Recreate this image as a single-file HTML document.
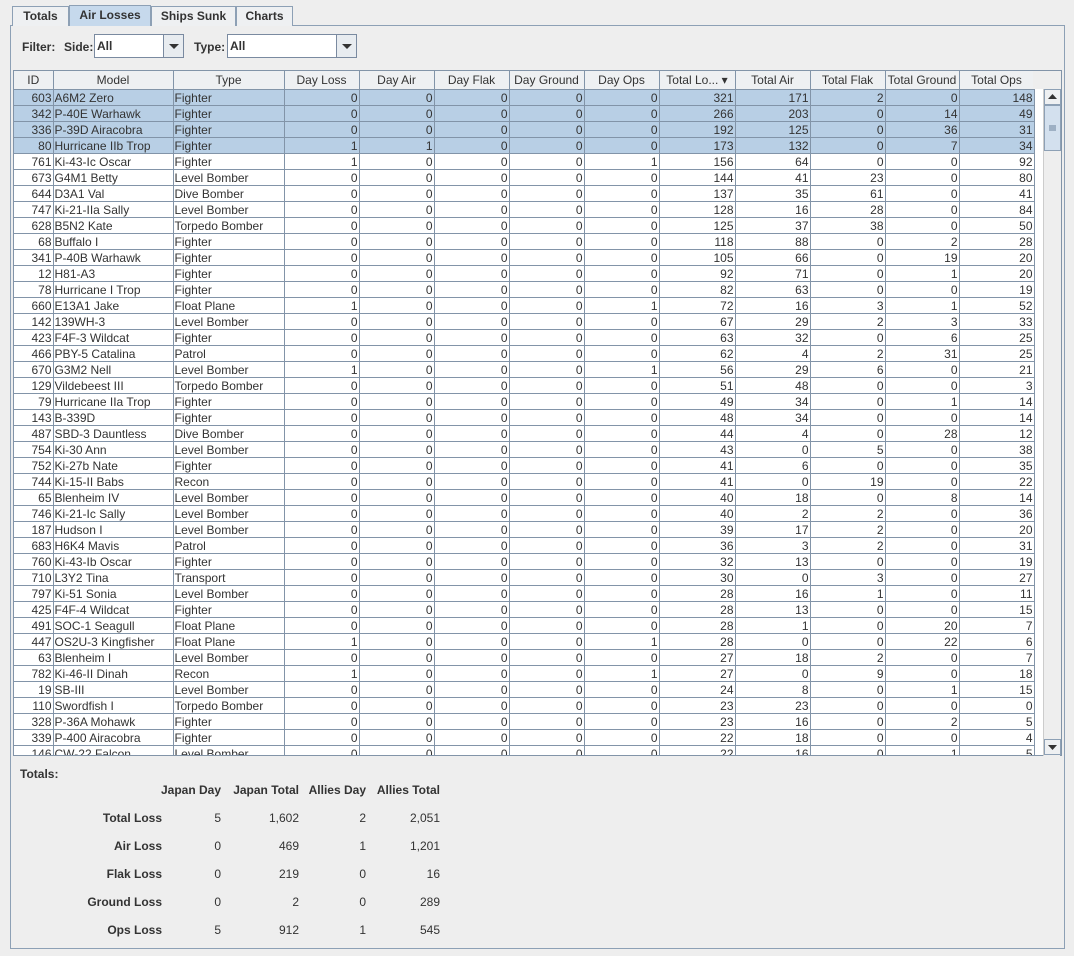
<!DOCTYPE html>
<html><head><meta charset="utf-8"><style>
*{box-sizing:border-box;margin:0;padding:0}
body{width:1074px;height:956px;background:#eeeeee;font-family:"Liberation Sans",sans-serif;font-size:12px;color:#333;position:relative;overflow:hidden}
.tab{position:absolute;top:6px;height:20px;border:1px solid #8da0b5;border-bottom:none;background:#eef0f2;font-weight:bold;font-size:12px;line-height:18px;text-align:center;color:#333}
.panel{position:absolute;left:10px;top:25px;width:1055px;height:924px;border:1px solid #8da0b5;background:#eeeeee}
.lbl{position:absolute;font-weight:bold;font-size:12px}
.combo{position:absolute;height:24px;border:1px solid #7a8aa0;background:#fff;font-weight:bold;line-height:22px;padding-left:2px}
.combo .btn{position:absolute;right:0;top:0;width:20px;height:22px;border-left:1px solid #7a8aa0;background:#e8ecf0}
.combo .btn:after{content:"";position:absolute;left:5px;top:9px;border-left:5px solid transparent;border-right:5px solid transparent;border-top:5px solid #333}
.tw{position:absolute;left:13px;top:70px;width:1030px;height:686px;overflow:hidden;background:#fff;border-left:1px solid #8294a8}
table{border-collapse:collapse;table-layout:fixed;width:1020px}
th{height:19px;font-weight:normal;background:#eef0f2;border-right:1px solid #8294a8;border-bottom:1px solid #8294a8;text-align:center;white-space:nowrap;overflow:hidden;padding:1px 0 0}
td{height:16px;line-height:14px;border-right:1px solid #8294a8;border-bottom:1px solid #8294a8;text-align:right;padding:1px 1px 0;white-space:nowrap;overflow:hidden}
td:nth-child(2),td:nth-child(3){text-align:left}
tr.s td{background:#b8cfe5}
.sb{position:absolute;left:1043px;top:89px;width:17px;height:667px;background:#eeeeee;border-left:1px solid #ccc}
.ar{position:absolute;left:0;width:17px;height:16px;border:1px solid #8da0b5;background:#eef0f2}
.thumb{position:absolute;left:0;top:16px;width:17px;height:46px;border:1px solid #8da0b5;background:#d3e0ee}
.tt{position:absolute;font-size:12px}
.b{font-weight:bold}
.r{text-align:right}
</style></head><body>
<div class="panel"></div>
<div class="tab" style="left:12px;width:57px">Totals</div>
<div class="tab" style="left:69px;width:82px;top:5px;height:21px;background:#c6d9ec">Air Losses</div>
<div class="tab" style="left:151px;width:85px">Ships Sunk</div>
<div class="tab" style="left:236px;width:57px">Charts</div>
<div class="lbl" style="left:22px;top:40px">Filter:</div>
<div class="lbl" style="left:64px;top:40px">Side:</div>
<div class="combo" style="left:94px;top:34px;width:90px">All<div class="btn"></div></div>
<div class="lbl" style="left:194px;top:40px">Type:</div>
<div class="combo" style="left:227px;top:34px;width:130px">All<div class="btn"></div></div>
<div class="tw"><table>
<colgroup><col style="width:39px"><col style="width:120px"><col style="width:111px"><col style="width:75px"><col style="width:75px"><col style="width:75px"><col style="width:75px"><col style="width:75px"><col style="width:76px"><col style="width:75px"><col style="width:75px"><col style="width:74px"><col style="width:75px"></colgroup>
<tr><th>ID</th><th>Model</th><th>Type</th><th>Day Loss</th><th>Day Air</th><th>Day Flak</th><th>Day Ground</th><th>Day Ops</th><th>Total Lo... &#9662;</th><th>Total Air</th><th>Total Flak</th><th>Total Ground</th><th>Total Ops</th></tr>
<tr class="s"><td>603<td>A6M2 Zero<td>Fighter<td>0<td>0<td>0<td>0<td>0<td>321<td>171<td>2<td>0<td>148</tr>
<tr class="s"><td>342<td>P-40E Warhawk<td>Fighter<td>0<td>0<td>0<td>0<td>0<td>266<td>203<td>0<td>14<td>49</tr>
<tr class="s"><td>336<td>P-39D Airacobra<td>Fighter<td>0<td>0<td>0<td>0<td>0<td>192<td>125<td>0<td>36<td>31</tr>
<tr class="s"><td>80<td>Hurricane IIb Trop<td>Fighter<td>1<td>1<td>0<td>0<td>0<td>173<td>132<td>0<td>7<td>34</tr>
<tr><td>761<td>Ki-43-Ic Oscar<td>Fighter<td>1<td>0<td>0<td>0<td>1<td>156<td>64<td>0<td>0<td>92</tr>
<tr><td>673<td>G4M1 Betty<td>Level Bomber<td>0<td>0<td>0<td>0<td>0<td>144<td>41<td>23<td>0<td>80</tr>
<tr><td>644<td>D3A1 Val<td>Dive Bomber<td>0<td>0<td>0<td>0<td>0<td>137<td>35<td>61<td>0<td>41</tr>
<tr><td>747<td>Ki-21-IIa Sally<td>Level Bomber<td>0<td>0<td>0<td>0<td>0<td>128<td>16<td>28<td>0<td>84</tr>
<tr><td>628<td>B5N2 Kate<td>Torpedo Bomber<td>0<td>0<td>0<td>0<td>0<td>125<td>37<td>38<td>0<td>50</tr>
<tr><td>68<td>Buffalo I<td>Fighter<td>0<td>0<td>0<td>0<td>0<td>118<td>88<td>0<td>2<td>28</tr>
<tr><td>341<td>P-40B Warhawk<td>Fighter<td>0<td>0<td>0<td>0<td>0<td>105<td>66<td>0<td>19<td>20</tr>
<tr><td>12<td>H81-A3<td>Fighter<td>0<td>0<td>0<td>0<td>0<td>92<td>71<td>0<td>1<td>20</tr>
<tr><td>78<td>Hurricane I Trop<td>Fighter<td>0<td>0<td>0<td>0<td>0<td>82<td>63<td>0<td>0<td>19</tr>
<tr><td>660<td>E13A1 Jake<td>Float Plane<td>1<td>0<td>0<td>0<td>1<td>72<td>16<td>3<td>1<td>52</tr>
<tr><td>142<td>139WH-3<td>Level Bomber<td>0<td>0<td>0<td>0<td>0<td>67<td>29<td>2<td>3<td>33</tr>
<tr><td>423<td>F4F-3 Wildcat<td>Fighter<td>0<td>0<td>0<td>0<td>0<td>63<td>32<td>0<td>6<td>25</tr>
<tr><td>466<td>PBY-5 Catalina<td>Patrol<td>0<td>0<td>0<td>0<td>0<td>62<td>4<td>2<td>31<td>25</tr>
<tr><td>670<td>G3M2 Nell<td>Level Bomber<td>1<td>0<td>0<td>0<td>1<td>56<td>29<td>6<td>0<td>21</tr>
<tr><td>129<td>Vildebeest III<td>Torpedo Bomber<td>0<td>0<td>0<td>0<td>0<td>51<td>48<td>0<td>0<td>3</tr>
<tr><td>79<td>Hurricane IIa Trop<td>Fighter<td>0<td>0<td>0<td>0<td>0<td>49<td>34<td>0<td>1<td>14</tr>
<tr><td>143<td>B-339D<td>Fighter<td>0<td>0<td>0<td>0<td>0<td>48<td>34<td>0<td>0<td>14</tr>
<tr><td>487<td>SBD-3 Dauntless<td>Dive Bomber<td>0<td>0<td>0<td>0<td>0<td>44<td>4<td>0<td>28<td>12</tr>
<tr><td>754<td>Ki-30 Ann<td>Level Bomber<td>0<td>0<td>0<td>0<td>0<td>43<td>0<td>5<td>0<td>38</tr>
<tr><td>752<td>Ki-27b Nate<td>Fighter<td>0<td>0<td>0<td>0<td>0<td>41<td>6<td>0<td>0<td>35</tr>
<tr><td>744<td>Ki-15-II Babs<td>Recon<td>0<td>0<td>0<td>0<td>0<td>41<td>0<td>19<td>0<td>22</tr>
<tr><td>65<td>Blenheim IV<td>Level Bomber<td>0<td>0<td>0<td>0<td>0<td>40<td>18<td>0<td>8<td>14</tr>
<tr><td>746<td>Ki-21-Ic Sally<td>Level Bomber<td>0<td>0<td>0<td>0<td>0<td>40<td>2<td>2<td>0<td>36</tr>
<tr><td>187<td>Hudson I<td>Level Bomber<td>0<td>0<td>0<td>0<td>0<td>39<td>17<td>2<td>0<td>20</tr>
<tr><td>683<td>H6K4 Mavis<td>Patrol<td>0<td>0<td>0<td>0<td>0<td>36<td>3<td>2<td>0<td>31</tr>
<tr><td>760<td>Ki-43-Ib Oscar<td>Fighter<td>0<td>0<td>0<td>0<td>0<td>32<td>13<td>0<td>0<td>19</tr>
<tr><td>710<td>L3Y2 Tina<td>Transport<td>0<td>0<td>0<td>0<td>0<td>30<td>0<td>3<td>0<td>27</tr>
<tr><td>797<td>Ki-51 Sonia<td>Level Bomber<td>0<td>0<td>0<td>0<td>0<td>28<td>16<td>1<td>0<td>11</tr>
<tr><td>425<td>F4F-4 Wildcat<td>Fighter<td>0<td>0<td>0<td>0<td>0<td>28<td>13<td>0<td>0<td>15</tr>
<tr><td>491<td>SOC-1 Seagull<td>Float Plane<td>0<td>0<td>0<td>0<td>0<td>28<td>1<td>0<td>20<td>7</tr>
<tr><td>447<td>OS2U-3 Kingfisher<td>Float Plane<td>1<td>0<td>0<td>0<td>1<td>28<td>0<td>0<td>22<td>6</tr>
<tr><td>63<td>Blenheim I<td>Level Bomber<td>0<td>0<td>0<td>0<td>0<td>27<td>18<td>2<td>0<td>7</tr>
<tr><td>782<td>Ki-46-II Dinah<td>Recon<td>1<td>0<td>0<td>0<td>1<td>27<td>0<td>9<td>0<td>18</tr>
<tr><td>19<td>SB-III<td>Level Bomber<td>0<td>0<td>0<td>0<td>0<td>24<td>8<td>0<td>1<td>15</tr>
<tr><td>110<td>Swordfish I<td>Torpedo Bomber<td>0<td>0<td>0<td>0<td>0<td>23<td>23<td>0<td>0<td>0</tr>
<tr><td>328<td>P-36A Mohawk<td>Fighter<td>0<td>0<td>0<td>0<td>0<td>23<td>16<td>0<td>2<td>5</tr>
<tr><td>339<td>P-400 Airacobra<td>Fighter<td>0<td>0<td>0<td>0<td>0<td>22<td>18<td>0<td>0<td>4</tr>
<tr><td>146<td>CW-22 Falcon<td>Level Bomber<td>0<td>0<td>0<td>0<td>0<td>22<td>16<td>0<td>1<td>5</tr>
</table></div>
<div style="position:absolute;left:1033px;top:70px;width:28px;height:19px;background:#eeeeee"></div>
<div style="position:absolute;left:13px;top:70px;width:1049px;height:686px;border:1px solid #8294a8;pointer-events:none"></div>
<div class="sb"><div class="ar" style="top:0"><svg width="15" height="14"><path d="M3 9 L7.5 4 L12 9Z" fill="#333"/></svg></div><div class="thumb"><svg width="15" height="44"><path d="M4 20h7M4 22h7M4 24h7" stroke="#6a7f99"/></svg></div><div class="ar" style="top:650px"><svg width="15" height="14"><path d="M3 5 L7.5 10 L12 5Z" fill="#333"/></svg></div></div>
<div class="tt b" style="left:20px;top:767px">Totals:</div>
<div class="tt b r" style="left:140px;top:783px;width:81px">Japan Day</div>
<div class="tt b r" style="left:220px;top:783px;width:79px">Japan Total</div>
<div class="tt b r" style="left:300px;top:783px;width:66px">Allies Day</div>
<div class="tt b r" style="left:366px;top:783px;width:74px">Allies Total</div>
<div class="tt b r" style="left:40px;top:811px;width:122px">Total Loss</div><div class="tt r" style="left:180px;top:811px;width:41px">5</div><div class="tt r" style="left:240px;top:811px;width:59px">1,602</div><div class="tt r" style="left:320px;top:811px;width:46px">2</div><div class="tt r" style="left:380px;top:811px;width:60px">2,051</div>
<div class="tt b r" style="left:40px;top:839px;width:122px">Air Loss</div><div class="tt r" style="left:180px;top:839px;width:41px">0</div><div class="tt r" style="left:240px;top:839px;width:59px">469</div><div class="tt r" style="left:320px;top:839px;width:46px">1</div><div class="tt r" style="left:380px;top:839px;width:60px">1,201</div>
<div class="tt b r" style="left:40px;top:867px;width:122px">Flak Loss</div><div class="tt r" style="left:180px;top:867px;width:41px">0</div><div class="tt r" style="left:240px;top:867px;width:59px">219</div><div class="tt r" style="left:320px;top:867px;width:46px">0</div><div class="tt r" style="left:380px;top:867px;width:60px">16</div>
<div class="tt b r" style="left:40px;top:895px;width:122px">Ground Loss</div><div class="tt r" style="left:180px;top:895px;width:41px">0</div><div class="tt r" style="left:240px;top:895px;width:59px">2</div><div class="tt r" style="left:320px;top:895px;width:46px">0</div><div class="tt r" style="left:380px;top:895px;width:60px">289</div>
<div class="tt b r" style="left:40px;top:923px;width:122px">Ops Loss</div><div class="tt r" style="left:180px;top:923px;width:41px">5</div><div class="tt r" style="left:240px;top:923px;width:59px">912</div><div class="tt r" style="left:320px;top:923px;width:46px">1</div><div class="tt r" style="left:380px;top:923px;width:60px">545</div>
</body></html>
